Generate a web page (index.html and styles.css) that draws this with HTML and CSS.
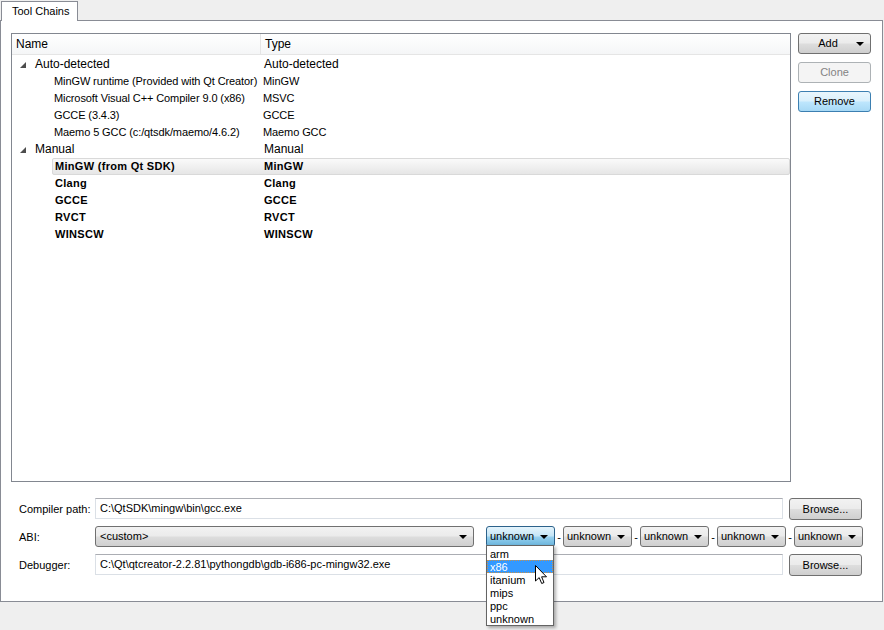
FILE: index.html
```html
<html>
<head>
	<meta charset="utf-8" />
	<title>Tool Chains</title>
	<link rel="stylesheet" href="styles.css">
</head>

<body>
	<div class="tabs">
		<div class="tab">Tool Chains</div>
	</div>
	<div class="pane">
		<div class="top">
			<div class="tree">
				<div class="header">
					<div class="hcol name-col">Name</div>
					<div class="hcol">Type</div>
				</div>
				<div class="rows">
					<div class="row group">
						<div class="indent"><svg class="arrow" width="6" height="6" viewBox="0 0 6 6"><polygon points="6,0 6,6 0,6" /></svg></div>
						<div class="item"><span class="name">Auto-detected</span><span class="type">Auto-detected</span></div>
					</div>
					<div class="row child">
						<div class="indent"></div>
						<div class="item"><span class="name">MinGW runtime (Provided with Qt Creator)</span><span class="type">MinGW</span></div>
					</div>
					<div class="row child">
						<div class="indent"></div>
						<div class="item"><span class="name">Microsoft Visual C++ Compiler 9.0 (x86)</span><span class="type">MSVC</span></div>
					</div>
					<div class="row child">
						<div class="indent"></div>
						<div class="item"><span class="name">GCCE (3.4.3)</span><span class="type">GCCE</span></div>
					</div>
					<div class="row child">
						<div class="indent"></div>
						<div class="item"><span class="name">Maemo 5 GCC (c:/qtsdk/maemo/4.6.2)</span><span class="type">Maemo GCC</span></div>
					</div>
					<div class="row group">
						<div class="indent"><svg class="arrow" width="6" height="6" viewBox="0 0 6 6"><polygon points="6,0 6,6 0,6" /></svg></div>
						<div class="item"><span class="name">Manual</span><span class="type">Manual</span></div>
					</div>
					<div class="row child bold">
						<div class="indent"></div>
						<div class="item selected"><span class="name">MinGW (from Qt SDK)</span><span class="type">MinGW</span></div>
					</div>
					<div class="row child bold">
						<div class="indent"></div>
						<div class="item"><span class="name">Clang</span><span class="type">Clang</span></div>
					</div>
					<div class="row child bold">
						<div class="indent"></div>
						<div class="item"><span class="name">GCCE</span><span class="type">GCCE</span></div>
					</div>
					<div class="row child bold">
						<div class="indent"></div>
						<div class="item"><span class="name">RVCT</span><span class="type">RVCT</span></div>
					</div>
					<div class="row child bold">
						<div class="indent"></div>
						<div class="item"><span class="name">WINSCW</span><span class="type">WINSCW</span></div>
					</div>
				</div>
			</div>
			<div class="side">
				<div class="btn menu-btn">Add <span class="drop"></span></div>
				<div class="btn disabled">Clone</div>
				<div class="btn hot">Remove</div>
			</div>
		</div>

		<div class="form">
			<div class="frow">
				<span class="lbl">Compiler path:</span>
				<div class="input">C:\QtSDK\mingw\bin\gcc.exe</div>
				<div class="btn browse">Browse...</div>
			</div>
			<div class="frow">
				<span class="lbl">ABI:</span>
				<div class="combo abi">&lt;custom&gt;<span class="drop"></span></div>
				<div class="combo small open">unknown<span class="drop"></span></div>
				<span class="dash">-</span>
				<div class="combo small">unknown<span class="drop"></span></div>
				<span class="dash">-</span>
				<div class="combo small">unknown<span class="drop"></span></div>
				<span class="dash">-</span>
				<div class="combo small">unknown<span class="drop"></span></div>
				<span class="dash">-</span>
				<div class="combo small">unknown<span class="drop"></span></div>
			</div>
			<div class="frow">
				<span class="lbl">Debugger:</span>
				<div class="input">C:\Qt\qtcreator-2.2.81\pythongdb\gdb-i686-pc-mingw32.exe</div>
				<div class="btn browse">Browse...</div>
			</div>
		</div>
	</div>

	<div class="popup">
		<div class="opt">arm</div>
		<div class="opt current">x86</div>
		<div class="opt">itanium</div>
		<div class="opt">mips</div>
		<div class="opt">ppc</div>
		<div class="opt">unknown</div>
	</div>

	<svg class="cursor" width="13" height="20" viewBox="0 0 13 20">
		<path d="M0.5,0.5 L0.5,16 L4.2,12.6 L6.7,18.5 L9,17.5 L6.6,11.8 L11.5,11.8 Z" fill="#fff" stroke="#000" stroke-width="1" stroke-linejoin="round" />
	</svg>
</body>
</html>
```

FILE: styles.css
```css
body {
	margin: 0;
	width: 884px;
	height: 630px;
	overflow: hidden;
	position: relative;
	background-color: #efefef;
	font-family: "Liberation Sans", Arial, sans-serif;
	font-size: 11px;
	color: #000;
}

.tabs {
	display: flex;
	height: 19px;
	padding: 1px 0 0 1px;
}

.tab {
	box-sizing: border-box;
	width: 77px;
	height: 20px;
	margin-bottom: -1px;
	padding-left: 10px;
	line-height: 19px;
	background-color: #fff;
	border: 1px solid #898c95;
	border-bottom: none;
	position: relative;
	z-index: 1;
}

.pane {
	box-sizing: border-box;
	width: 883px;
	height: 582px;
	padding: 12px 0 0 10px;
	background-color: #fff;
	border: 1px solid #898c95;
}

.top {
	display: flex;
	gap: 7px;
}

.tree {
	box-sizing: border-box;
	width: 780px;
	height: 449px;
	border: 1px solid #828790;
}

.header {
	display: flex;
	height: 20px;
	background: linear-gradient(#ffffff, #f5f6f7);
	border-bottom: 1px solid #e5e5e5;
	font-size: 12px;
}

.hcol {
	padding-left: 4px;
	line-height: 21px;
}

.name-col {
	box-sizing: border-box;
	width: 249px;
	border-right: 1px solid #e5e5e5;
}

.rows {
	padding-top: 1px;
}

.row {
	display: flex;
	height: 17px;
}

.indent {
	flex: none;
	position: relative;
}

.arrow {
	position: absolute;
	left: 8px;
	top: 6px;
	fill: #4d4d4d;
}

.item {
	flex: 1;
	display: flex;
	box-sizing: border-box;
	height: 17px;
	line-height: 15px;
	border: 1px solid transparent;
	border-radius: 2px;
	white-space: nowrap;
}

.name {
	flex: none;
	padding-left: 1px;
	overflow: hidden;
}

.type {
	padding-left: 2px;
}

.group {
	font-size: 12px;
}

.group .indent {
	width: 21px;
}

.group .name {
	width: 226px;
}

.group .type {
	padding-left: 3px;
}

.child {
	letter-spacing: -0.1px;
}

.child .indent {
	width: 40px;
}

.child .name {
	width: 207px;
}

.bold {
	font-weight: bold;
	letter-spacing: 0.3px;
}

.bold .name {
	padding-left: 2px;
}

.selected {
	background: linear-gradient(#fafafa, #e6e6e6);
	border-color: #d9d9d9;
}

.side {
	display: flex;
	flex-direction: column;
	gap: 8px;
	width: 73px;
}

.btn {
	box-sizing: border-box;
	height: 21px;
	line-height: 19px;
	text-align: center;
	border: 1px solid #707070;
	border-radius: 3px;
	background: linear-gradient(#f2f2f2 0%, #ebebeb 48%, #dddddd 52%, #cfcfcf 100%);
	position: relative;
}

.menu-btn {
	padding-right: 13px;
}

.btn .drop,
.combo .drop {
	position: absolute;
	right: 6px;
	top: 8px;
	width: 0;
	height: 0;
	border-left: 4px solid transparent;
	border-right: 4px solid transparent;
	border-top: 4px solid #000;
}

.disabled {
	color: #838383;
	border-color: #adb2b5;
	background: #f4f4f4;
}

.hot {
	border-color: #3c7fb1;
	background: linear-gradient(#eaf6fd 0%, #d9f0fc 48%, #bee6fd 52%, #a7d9f5 100%);
}

.form {
	margin-top: 16px;
}

.frow {
	display: flex;
	align-items: center;
	height: 21px;
	margin-bottom: 7px;
}

.lbl {
	box-sizing: border-box;
	width: 84px;
	padding-left: 8px;
}

.input {
	box-sizing: border-box;
	width: 688px;
	height: 21px;
	line-height: 19px;
	padding-left: 4px;
	border: 1px solid #dbe0e6;
	border-top-color: #abadb3;
	white-space: nowrap;
}

.browse {
	width: 73px;
	height: 22px;
	margin-left: 6px;
	line-height: 20px;
}

.combo {
	box-sizing: border-box;
	height: 21px;
	line-height: 19px;
	padding-left: 4px;
	border: 1px solid #707070;
	border-radius: 3px;
	background: linear-gradient(#f2f2f2 0%, #ebebeb 48%, #dddddd 52%, #cfcfcf 100%);
	position: relative;
}

.abi {
	width: 379px;
	margin-right: 12px;
}

.small {
	width: 69px;
	padding-left: 3px;
}

.open {
	border-color: #2c628b;
	background: linear-gradient(#e5f4fc 0%, #c4e5f6 48%, #98d1ef 52%, #68b3db 100%);
}

.dash {
	width: 8px;
	text-align: center;
}

.popup {
	position: absolute;
	left: 486px;
	top: 545px;
	box-sizing: border-box;
	width: 68px;
	height: 81px;
	padding-top: 1px;
	background-color: #fff;
	border: 1px solid #646464;
	box-shadow: 2px 2px 3px rgba(0, 0, 0, 0.3);
}

.opt {
	box-sizing: border-box;
	height: 13px;
	line-height: 12px;
	padding-left: 2px;
	border: 1px solid transparent;
}

.current {
	color: #fff;
	background-color: #3399ff;
	border: 1px dotted #c8904a;
}

.cursor {
	position: absolute;
	left: 535px;
	top: 565px;
}
```
